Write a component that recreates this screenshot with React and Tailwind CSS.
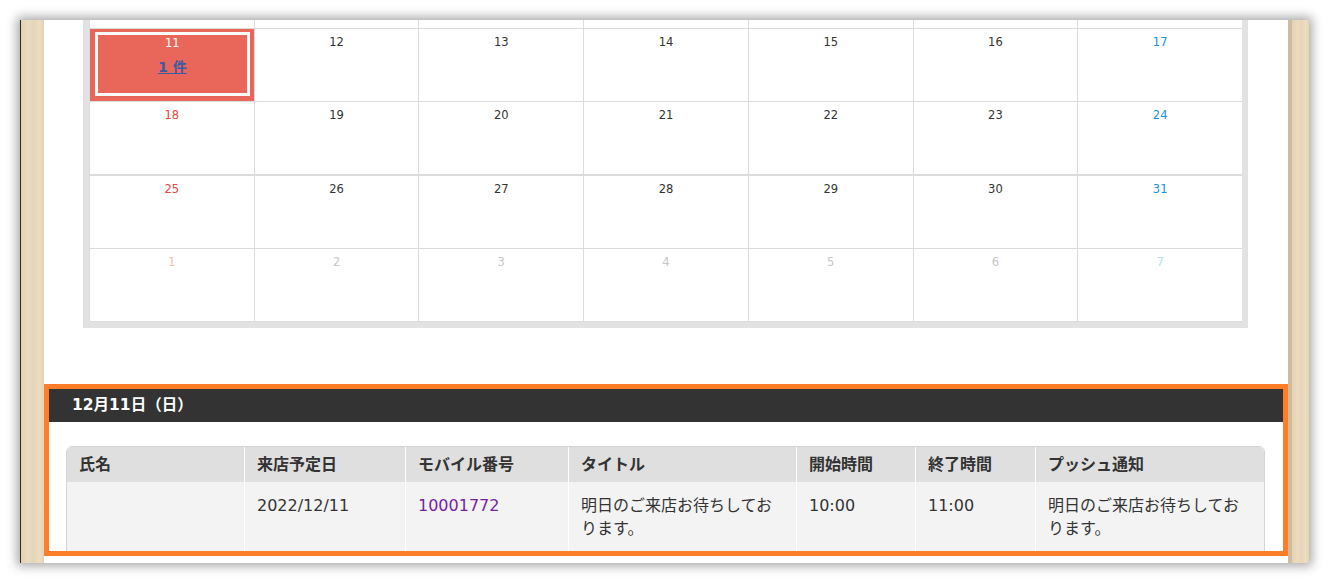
import React from 'react';

const weeks = [
    [11, 12, 13, 14, 15, 16, 17],
    [18, 19, 20, 21, 22, 23, 24],
    [25, 26, 27, 28, 29, 30, 31],
    [1, 2, 3, 4, 5, 6, 7],
];

const dayColor = (week, col) => {
    if (week === 3) {
        if (col === 0) return 'text-[#f5bdb3]';
        if (col === 6) return 'text-[#b5dcf0]';
        return 'text-[#c6c6c6]';
    }
    if (col === 0) return 'text-[#e5473d]';
    if (col === 6) return 'text-[#2190d6]';
    return 'text-[#333]';
};

const columns = [
    { label: '氏名', w: 'w-[177px]' },
    { label: '来店予定日', w: 'w-[161px]' },
    { label: 'モバイル番号', w: 'w-[163px]' },
    { label: 'タイトル', w: 'w-[228px]' },
    { label: '開始時間', w: 'w-[119px]' },
    { label: '終了時間', w: 'w-[120px]' },
    { label: 'プッシュ通知', w: 'w-[229px]' },
];

const row = ['', '2022/12/11', '10001772', '明日のご来店お待ちしております。', '10:00', '11:00', '明日のご来店お待ちしております。'];

const Wood = ({ className }) => (
    <div
        className={`h-full bg-[linear-gradient(90deg,#e2d1b2_0%,#ebdcc0_30%,#e6d5b7_55%,#ecdec3_80%,#e4d3b4_100%)] ${className}`}
    />
);

const Calendar = () => (
    <div className="ml-[39px] w-[1165px] border-x-[6px] border-b-[6px] border-[#e2e2e2] bg-white">
        {/* tail of the previous week, scrolled out of view */}
        <div className="grid grid-cols-7 h-[9px] border-b border-[#dcdcdc]">
            {Array.from({ length: 7 }).map((_, i) => (
                <div key={i} className="border-l border-[#dcdcdc]" />
            ))}
        </div>
        {weeks.map((week, w) => (
            <div
                key={w}
                className={`grid grid-cols-7 border-[#dcdcdc] ${w === 1 ? 'h-[74px] border-b-2' : 'h-[73px] border-b'}`}
            >
                {week.map((day, c) => {
                    if (w === 0 && c === 0) {
                        return (
                            <div key={c} className="border-l border-[#dcdcdc] bg-[#e9665a] pt-[3px] pr-[4px] pb-[5px] pl-[5px]">
                                <div className="h-full border-[3px] border-white flex flex-col items-center">
                                    <span className="text-[11.5px] leading-[15px] pt-[1px] text-white">{day}</span>
                                    <a href="#" className="mt-[8px] text-[14px] leading-[16px] font-bold text-[#3b5ba6] underline">
                                        1 件
                                    </a>
                                </div>
                            </div>
                        );
                    }
                    return (
                        <div key={c} className="border-l border-[#dcdcdc] flex justify-center">
                            <span className={`pt-[6px] text-[11.5px] leading-[15px] ${dayColor(w, c)}`}>{day}</span>
                        </div>
                    );
                })}
            </div>
        ))}
    </div>
);

const Schedule = () => (
    <div className="mt-[56px] h-[172px] border-[5px] border-[#fd7e26] overflow-hidden bg-white">
        <div className="h-[33px] bg-[#333333] flex items-center pl-[23px]">
            <span className="text-white font-bold text-[15.5px]">12月11日（日）</span>
        </div>
        <div className="mt-[24px] ml-[17px] w-[1199px] rounded-t-[6px] border border-[#d4d4d4] overflow-hidden">
            <div className="flex h-[35px] bg-[#e0dfe0]">
                {columns.map((col, i) => (
                    <div
                        key={col.label}
                        className={`${col.w} shrink-0 flex items-center pl-3 font-bold text-[16px] text-[#333] ${i > 0 ? 'border-l border-white' : ''}`}
                    >
                        {col.label}
                    </div>
                ))}
            </div>
            <div className="flex bg-[#f3f3f3]">
                {columns.map((col, i) => (
                    <div
                        key={col.label}
                        className={`${col.w} shrink-0 px-3 pt-[12px] pb-4 text-[16px] leading-[23px] ${i > 0 ? 'border-l border-white' : ''} ${i === 2 ? 'text-[#7a1fa2]' : 'text-[#333]'}`}
                    >
                        {row[i]}
                    </div>
                ))}
            </div>
        </div>
    </div>
);

export default function App() {
    return (
        <div className="w-[1329px] h-[583px] bg-white pt-[20px] pl-[20px] overflow-hidden font-['DejaVu_Sans','Noto_Sans_CJK_JP',sans-serif]">
            <div className="flex w-[1289px] h-[543px] shadow-[0_0_10px_3px_rgba(0,0,0,0.35)]">
                <div className="w-px h-full bg-[#2a2a2a]" />
                <Wood className="w-[23px]" />
                <div className="w-[1244px] h-full bg-white overflow-hidden">
                    <Calendar />
                    <Schedule />
                </div>
                <div className="flex h-full w-[21px]">
                    <div className="w-[4px] h-full bg-[#cfbc9c]" />
                    <Wood className="flex-1" />
                </div>
            </div>
        </div>
    );
}
